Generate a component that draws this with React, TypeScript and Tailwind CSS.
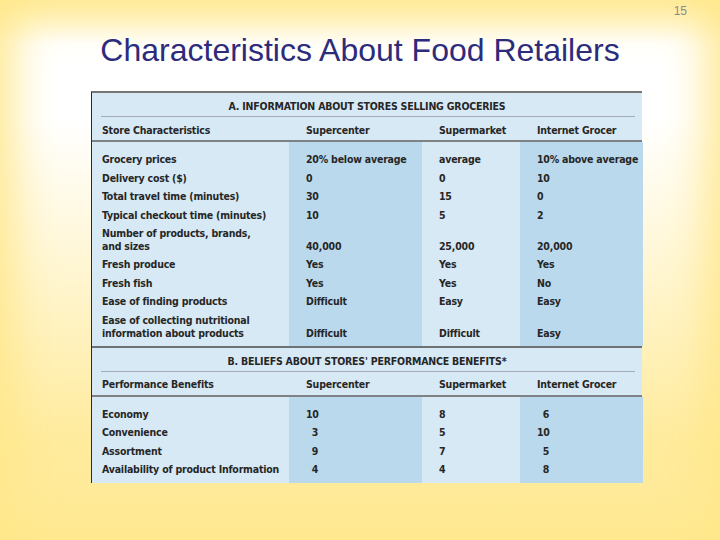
const LIGHT = "bg-[#d7e9f5]";
const DARK = "bg-[#bad9ec]";

type Row = { label: string[]; values: string[] };

const infoRows: Row[] = [
  { label: ["Grocery prices"], values: ["20% below average", "average", "10% above average"] },
  { label: ["Delivery cost ($)"], values: ["0", "0", "10"] },
  { label: ["Total travel time (minutes)"], values: ["30", "15", "0"] },
  { label: ["Typical checkout time (minutes)"], values: ["10", "5", "2"] },
  { label: ["Number of products, brands,", "and sizes"], values: ["40,000", "25,000", "20,000"] },
  { label: ["Fresh produce"], values: ["Yes", "Yes", "Yes"] },
  { label: ["Fresh fish"], values: ["Yes", "Yes", "No"] },
  { label: ["Ease of finding products"], values: ["Difficult", "Easy", "Easy"] },
  {
    label: ["Ease of collecting nutritional", "information about products"],
    values: ["Difficult", "Difficult", "Easy"],
  },
];

const beliefRows: Row[] = [
  { label: ["Economy"], values: ["10", "8", "6"] },
  { label: ["Convenience"], values: ["3", "5", "10"] },
  { label: ["Assortment"], values: ["9", "7", "5"] },
  { label: ["Availability of product Information"], values: ["4", "4", "8"] },
];

const cols = "grid grid-cols-[197px_133px_98px_123px]";
const colBg = [LIGHT, DARK, LIGHT, DARK];

function SectionHead({ title, first }: { title: string; first: string }) {
  return (
    <div className={LIGHT}>
      <div className="flex h-[23px] items-center justify-center pt-[5px]">{title}</div>
      <div className="ml-[9px] mr-[7px] border-t border-[#a3adb3]" />
      <div className={`${cols} h-[23px] items-center pt-[4px]`}>
        <div className="pl-[10px]">{first}</div>
        <div className="pl-[17px]">Supercenter</div>
        <div className="pl-[17px]">Supermarket</div>
        <div className="pl-[17px]">Internet Grocer</div>
      </div>
      <div className="h-[2px] bg-[#7f8284]" />
    </div>
  );
}

function Spacer() {
  return (
    <>
      {colBg.map((bg, i) => (
        <div key={i} className={`${bg} h-[6px]`} />
      ))}
    </>
  );
}

function DataBlock({ rows, numeric }: { rows: Row[]; numeric?: boolean }) {
  return (
    <div className={cols}>
      <Spacer />
      {rows.map((r, ri) => {
        const two = r.label.length > 1;
        return (
          <div key={ri} className="contents">
            <div
              className={`${LIGHT} flex flex-col pl-[10px] ${
                two ? "h-[31px] justify-end leading-[13px]" : "h-[18.5px] justify-center pt-[4px] leading-[14px]"
              }`}
            >
              {r.label.map((l) => (
                <span key={l}>{l}</span>
              ))}
            </div>
            {r.values.map((v, vi) => (
              <div
                key={vi}
                className={`${colBg[vi + 1]} flex pl-[17px] ${
                  two ? "h-[31px] items-end leading-[13px]" : "h-[18.5px] items-center pt-[4px] leading-[14px]"
                }`}
              >
                {numeric && vi !== 1 ? <span className="w-[12px] text-right">{v}</span> : v}
              </div>
            ))}
          </div>
        );
      })}
      <Spacer />
    </div>
  );
}

export default function App() {
  return (
    <div className="flex h-[540px] w-[720px] flex-col bg-[linear-gradient(to_bottom,#fff3bd_0%,#ffffff_8%,#ffffff_22%,#fff6d2_50%,#ffeb9c_82%,#ffea98_100%)] shadow-[inset_0_0_45px_12px_#ffe789] font-['Liberation_Sans',Arial,sans-serif]">
      <div className="flex justify-end pr-[33px] pt-[4px] text-[12px] leading-[14px] text-[#8a8a8a]">15</div>
      <h1 className="mt-[14px] text-center text-[32px] leading-[36px] text-[#2d2b7c]">
        Characteristics About Food Retailers
      </h1>
      <div className="ml-[91px] mt-[23px] w-[551px] whitespace-nowrap border-l border-t-2 border-l-[#2a2a2a] border-t-[#767676] font-['Liberation_Sans_Narrow','Arial_Narrow','DejaVu_Sans_Condensed',sans-serif] text-[10.5px] font-bold tracking-[-0.2px] text-[#262626]">
        <SectionHead title="A. INFORMATION ABOUT STORES SELLING GROCERIES" first="Store Characteristics" />
        <DataBlock rows={infoRows} />
        <div className="h-[2px] bg-[#6f7274]" />
        <SectionHead title="B. BELIEFS ABOUT STORES' PERFORMANCE BENEFITS*" first="Performance Benefits" />
        <DataBlock rows={beliefRows} numeric />
      </div>
    </div>
  );
}
